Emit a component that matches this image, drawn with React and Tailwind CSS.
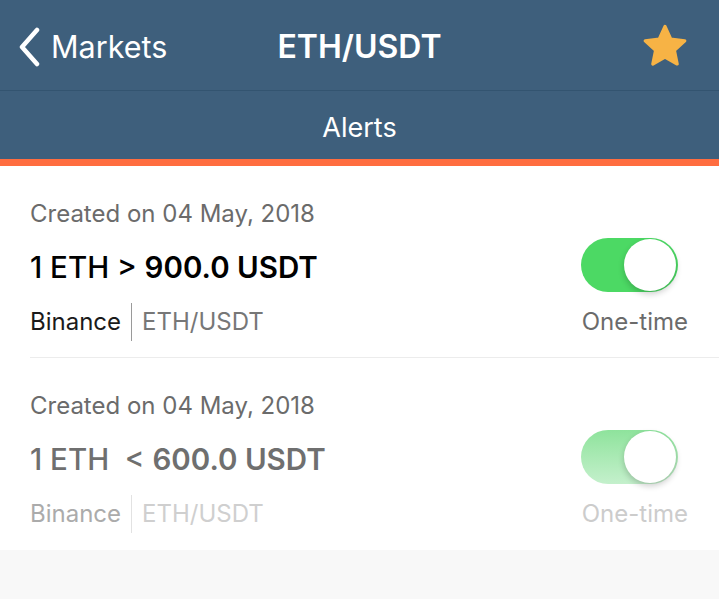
import React from "react";

function Star() {
  return (
    <svg width="48" height="46" viewBox="0 0 24 23">
      <path
        d="M12 1.2 L14.9 7.6 L21.9 8.4 L16.7 13.1 L18.1 20 L12 16.5 L5.9 20 L7.3 13.1 L2.1 8.4 L9.1 7.6 Z"
        fill="#f7b345"
        stroke="#f7b345"
        strokeWidth="1.6"
        strokeLinejoin="round"
      />
    </svg>
  );
}

function Toggle({ faded }) {
  return (
    <div
      className={
        "relative w-[97px] h-[54px] rounded-full " +
        (faded
          ? "bg-gradient-to-b from-[#8ee39c] to-[#c4f0cc]"
          : "bg-[#4cd964]")
      }
    >
      <div className="absolute right-[2px] top-[1px] w-[52px] h-[52px] rounded-full bg-white shadow-[0_3px_6px_rgba(0,0,0,0.2)]" />
    </div>
  );
}

function Row({ op, price, faded, last }) {
  return (
    <div className="pl-[30px]">
      <div
        className={
          "flex items-start pr-[31px] h-[192px] " +
          (last ? "" : "border-b border-[#ececec]")
        }
      >
        <div className="flex-1 pt-[34px]">
          <div className="text-[24px] leading-[28px] text-[#6b6b6b]">
            Created on 04 May, 2018
          </div>
          <div
            className={
              "mt-[22px] text-[29.5px] leading-[34px] " +
              (faded ? "text-[#6f6f6f]" : "text-black")
            }
          >
            <span className="font-medium">1 ETH {op} </span>
            <span className="font-semibold">{price} USDT</span>
          </div>
          <div className="mt-[19px] flex items-center text-[24px] leading-[28px]">
            <span className={faded ? "text-[#ababab]" : "text-[#1a1a1a]"}>
              Binance
            </span>
            <span
              className={
                "mx-[10px] w-px h-[38px] " +
                (faded ? "bg-[#e2e2e2]" : "bg-[#9a9a9a]")
              }
            />
            <span className={faded ? "text-[#cfcfcf]" : "text-[#777777]"}>
              ETH/USDT
            </span>
          </div>
        </div>
        <div className="flex flex-col items-end pt-[72px]">
          <div className="mr-[10px]">
            <Toggle faded={faded} />
          </div>
          <div
            className={
              "mt-[16px] text-[24px] leading-[28px] " +
              (faded ? "text-[#cccccc]" : "text-[#6b6b6b]")
            }
          >
            One-time
          </div>
        </div>
      </div>
    </div>
  );
}

export default function App() {
  return (
    <div
      className="w-[719px] h-[599px] bg-[#f8f8f8] overflow-hidden"
      style={{ fontFamily: "Inter, 'Noto Sans', sans-serif" }}
    >
      <div className="bg-[#3e5f7c] text-white">
        <div className="h-[91px] flex items-center relative border-b border-[#335470] pt-[4px]">
          <div className="flex items-center pl-[17px]">
            <svg width="24" height="40" viewBox="0 0 24 40">
              <path
                d="M20 3 L5 20 L20 37"
                fill="none"
                stroke="white"
                strokeWidth="4.5"
                strokeLinecap="round"
                strokeLinejoin="round"
              />
            </svg>
            <span className="ml-[10px] text-[30.5px] leading-none">Markets</span>
          </div>
          <div className="absolute left-0 right-0 text-center text-[32px] font-semibold leading-none pointer-events-none">
            ETH/USDT
          </div>
          <div className="ml-auto mr-[30px] flex items-center">
            <Star />
          </div>
        </div>
        <div className="h-[68px] flex items-center justify-center text-[27px] pt-[6px]">
          Alerts
        </div>
        <div className="h-[7px] bg-[#ff6d40]" />
      </div>
      <div className="bg-white">
        <Row op=">" price="900.0" />
        <Row op={"\u00a0<"} price="600.0" faded last />
      </div>
    </div>
  );
}
